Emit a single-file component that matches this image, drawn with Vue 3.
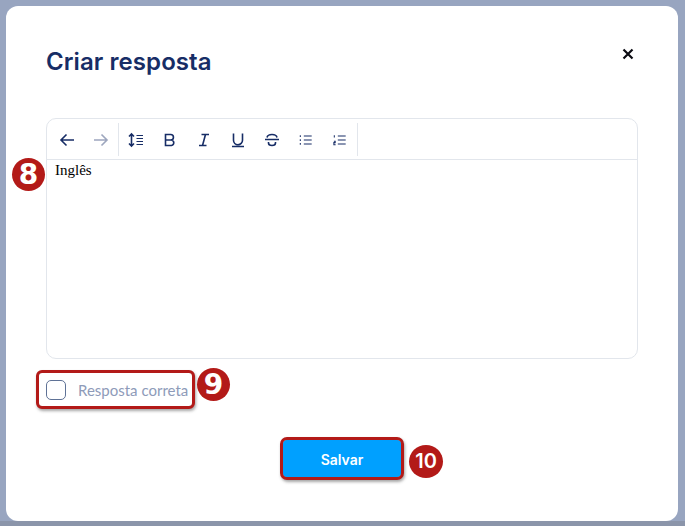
<template>
  <div class="page">
    <div class="modal">
      <header class="head">
        <h1 class="title">Criar resposta</h1>
        <button class="close" aria-label="Fechar">
          <svg width="12" height="12" viewBox="0 0 12 12">
            <path d="M1.500 1.500l9 9M10.500 1.500l-9 9" stroke="#0b0b12" stroke-width="2.200" fill="none" />
          </svg>
        </button>
      </header>

      <div class="editor-wrap">
        <span class="badge badge-8">8</span>
        <div class="editor">
          <div class="toolbar">
            <div class="group group-history">
              <button class="tool">
                <svg viewBox="0 0 16 16" width="16" height="16"><path d="M15 8H2M7.500 2.500L2 8l5.500 5.500" class="st" /></svg>
              </button>
              <button class="tool off">
                <svg viewBox="0 0 16 16" width="16" height="16"><path d="M1 8h13M8.500 2.500L14 8l-5.500 5.500" class="st" /></svg>
              </button>
            </div>
            <div class="group group-format">
              <button class="tool">
                <svg viewBox="0 0 16 16" width="16" height="16">
                  <path d="M3.500 2v12M1 4.500L3.500 2 6 4.500M1 11.500L3.500 14 6 11.500" class="st" />
                  <path d="M8.500 3.500h6.500M8.500 6.500h6.500M8.500 9.500h6.500M8.500 12.500h6.500" class="st thin" />
                </svg>
              </button>
              <button class="tool">
                <svg viewBox="0 0 16 16" width="16" height="16"><path d="M3.500 2.500h5.200a2.700 2.700 0 0 1 0 5.500H3.500zM3.500 8h6a2.800 2.800 0 0 1 0 5.500h-6z" class="st" /></svg>
              </button>
              <button class="tool">
                <svg viewBox="0 0 16 16" width="16" height="16"><path d="M5.500 2.500h7.500M3 13.500h7.500M9.500 2.500l-3 11" class="st" /></svg>
              </button>
              <button class="tool">
                <svg viewBox="0 0 16 16" width="16" height="16"><path d="M3.500 1.500v6.700a4.500 4.500 0 0 0 9 0V1.500M2 14.500h12" class="st" /></svg>
              </button>
              <button class="tool">
                <svg viewBox="0 0 16 16" width="16" height="16"><path d="M1 7.500h14M13 5.500c-.4-2-2.400-3-5-3s-4.600 1-5 3M4.500 10v1c0 1.700 1.500 2.500 3.500 2.500s3.500-.8 3.500-2.500v-1" class="st" /></svg>
              </button>
              <button class="tool">
                <svg viewBox="0 0 16 16" width="14" height="14">
                  <path d="M5.500 3.500h9M5.500 8h9M5.500 12.500h9" class="st thin" />
                  <path d="M1.500 2.500v2M1.500 7v2M1.500 11.500v2" class="st dots" />
                </svg>
              </button>
              <button class="tool">
                <svg viewBox="0 0 16 16" width="14" height="14">
                  <path d="M5.500 3.500h9M5.500 8h9M5.500 12.500h9" class="st thin" />
                  <path d="M1.500 2.500v2.500M1 9.500h1.500v1.500H1v2.500h2" class="st dots" />
                </svg>
              </button>
            </div>
          </div>
          <div class="content">Inglês</div>
        </div>
      </div>

      <div class="check-row">
        <label class="check mark">
          <span class="box"></span>
          <span class="check-text">Resposta correta</span>
        </label>
        <span class="badge badge-9">9</span>
      </div>

      <div class="actions">
        <div class="save-wrap">
          <button class="save mark">Salvar</button>
          <span class="badge badge-10">10</span>
        </div>
      </div>
    </div>
  </div>
</template>

<script setup>
</script>

<style>
html,
body {
  margin: 0;
  background: #98a5c0;
}
</style>

<style scoped>
.page {
  height: 526px;
  box-sizing: border-box;
  padding: 6px 7px 5px 6px;
  background: linear-gradient(#98a5c0 0 521px, #8b95aa 521px);
  overflow: hidden;
}
.modal {
  height: 515px;
  box-sizing: border-box;
  background: #fff;
  border-radius: 12px;
  padding: 0 40px;
}
.head {
  display: flex;
  justify-content: space-between;
  align-items: center;
  height: 112px;
  padding-bottom: 1px;
  box-sizing: border-box;
}
.title {
  margin: 0;
  font: 600 24px/32px Inter, "Noto Sans", sans-serif;
  letter-spacing: 0.07px;
  color: #172d66;
}
.close {
  display: flex;
  border: 0;
  padding: 0;
  margin: 0 3px 0 0;
  background: none;
  position: relative;
  top: -8px;
  left: -1px;
}
.editor-wrap {
  position: relative;
}
.editor {
  height: 241px;
  box-sizing: border-box;
  border: 1px solid #e2e6ec;
  border-radius: 10px;
  overflow: hidden;
}
.toolbar {
  display: flex;
  height: 41px;
  box-sizing: border-box;
  padding: 4px 0 3px;
  border-bottom: 1px solid #e2e6ec;
}
.group {
  display: flex;
  align-items: center;
}
.group-history {
  padding: 0 0 0 3px;
  border-right: 1px solid #e2e6ec;
}
.group-format {
  border-right: 1px solid #e2e6ec;
}
.tool {
  width: 34px;
  height: 34px;
  display: flex;
  align-items: center;
  justify-content: center;
  border: 0;
  padding: 0;
  background: none;
}
.off {
  opacity: 0.42;
}
.st {
  fill: none;
  stroke: #172d66;
  stroke-width: 1.6;
}
.thin {
  stroke-width: 1.2;
}
.dots {
  stroke-width: 1.2;
}
.content {
  padding: 1px 8px;
  font: 15px/18px "Liberation Serif", serif;
  color: #000;
}
.badge {
  position: absolute;
  display: flex;
  align-items: center;
  justify-content: center;
  border-radius: 50%;
  background: #b31a18;
  color: #fff;
  font-family: "DejaVu Sans", sans-serif;
  font-weight: 700;
}
.badge-8 {
  left: -34px;
  top: 40px;
  width: 33px;
  height: 33px;
  font-size: 28px;
}
.check-row {
  position: relative;
  margin-top: 12px;
  height: 40px;
}
.mark {
  outline: 3px solid #b31a18;
  outline-offset: 0;
  box-shadow: 1px 2px 3px 3px rgba(60, 60, 60, 0.45);
}
.check {
  position: absolute;
  left: -7px;
  top: 2px;
  width: 146px;
  height: 33px;
  display: flex;
  align-items: center;
  gap: 12px;
  padding-left: 7px;
  border-radius: 3px;
  background: #fff;
}
.box {
  width: 18px;
  height: 18px;
  border: 1px solid #5f7296;
  border-radius: 5px;
}
.check-text {
  font: 15px/18px Lato, sans-serif;
  color: #8e9bb9;
  white-space: nowrap;
}
.badge-9 {
  left: 151px;
  top: -3px;
  width: 33px;
  height: 33px;
  font-size: 28px;
}
.actions {
  display: flex;
  justify-content: center;
  margin-top: 29px;
}
.save-wrap {
  position: relative;
}
.save {
  display: block;
  width: 118px;
  height: 37px;
  border: 0;
  border-radius: 4px;
  background: #00a0ff;
  color: #fff;
  font: 600 14px/37px Inter, "Liberation Sans", sans-serif;
}
.badge-10 {
  left: 126px;
  top: 5px;
  width: 34px;
  height: 33px;
  font: 600 20px/33px Inter, sans-serif;
}
</style>
